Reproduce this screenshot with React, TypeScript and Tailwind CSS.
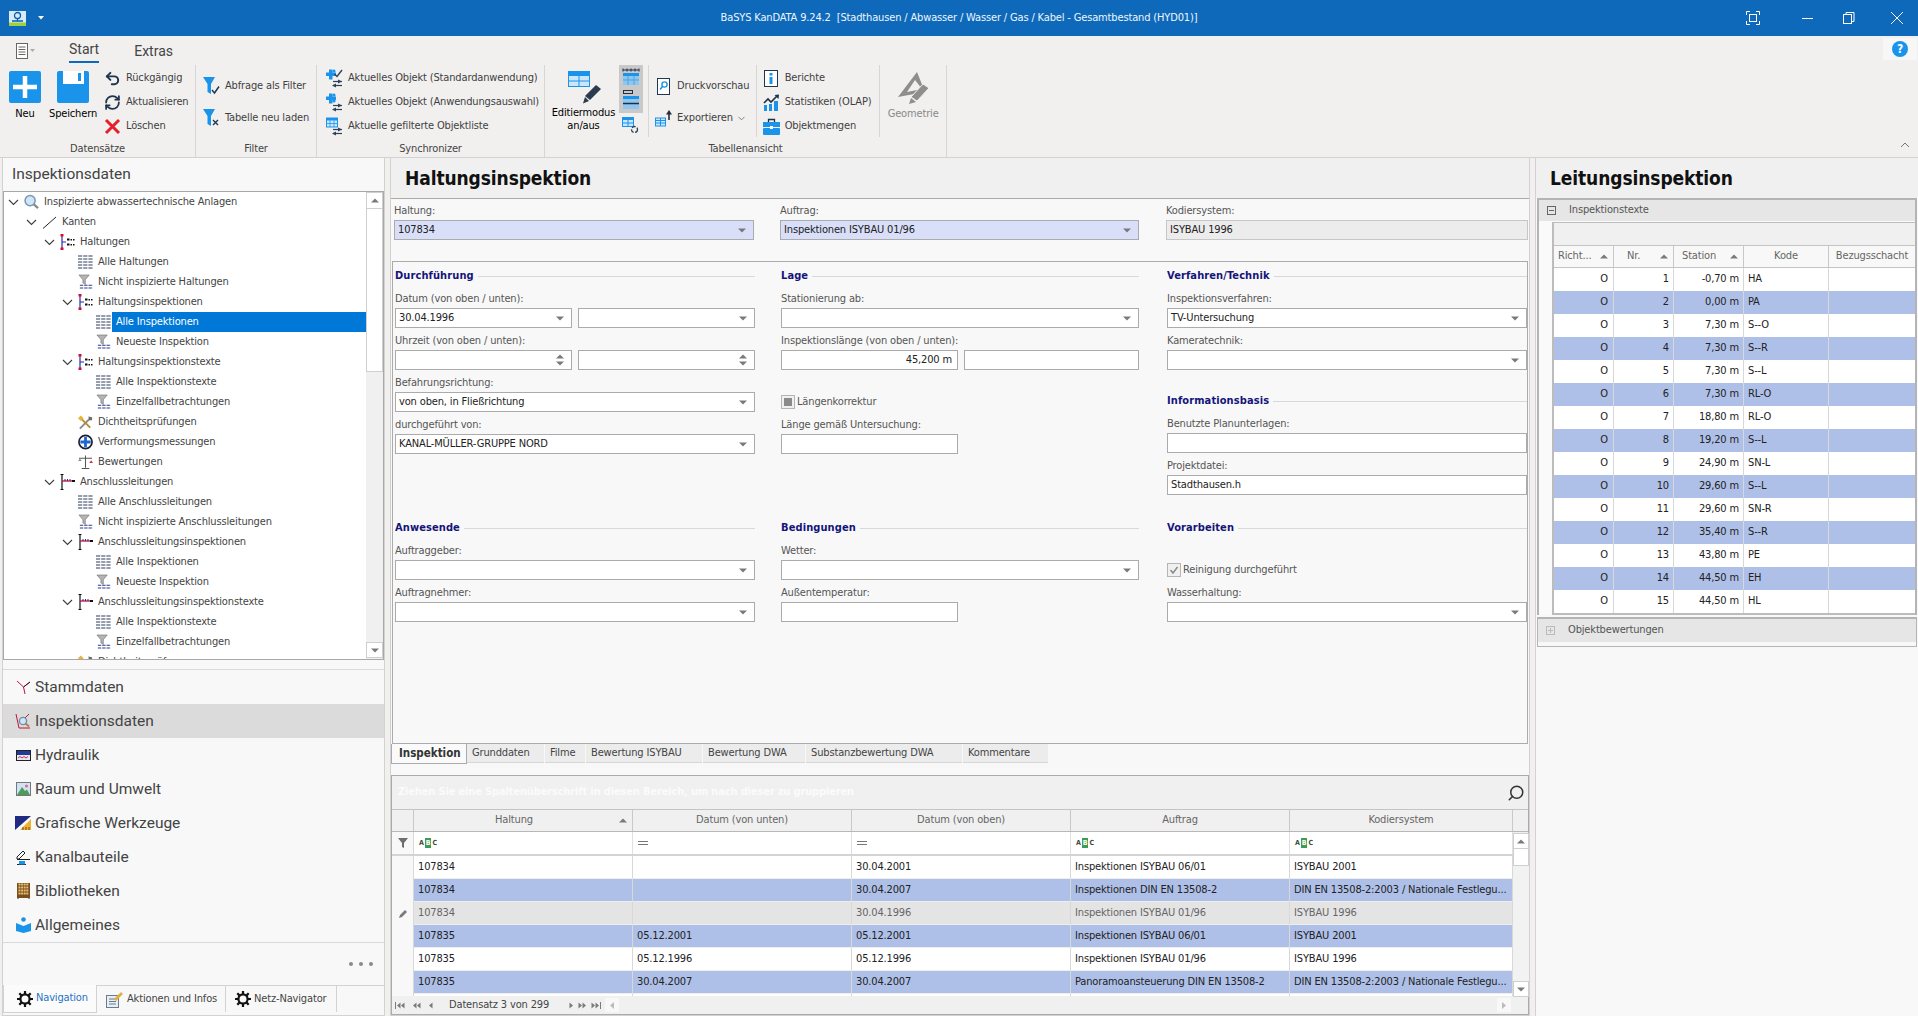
import type { ReactNode } from "react";
import { Undo2, RefreshCw, ChevronDown, Search } from "lucide-react";

// small drawings -------------------------------------------------------------
function Caret({ up }: { up?: boolean }) {
  return (
    <svg width="8" height="5" viewBox="0 0 8 5" className="shrink-0">
      <polygon points={up ? "0,4.5 8,4.5 4,0.5" : "0,0.5 8,0.5 4,4.5"} fill="#7a7a7a" />
    </svg>
  );
}

function Logo() {
  return (
    <svg width="17" height="15" viewBox="0 0 17 15">
      <rect width="17" height="15" fill="#d7ebfa" />
      <circle cx="8.5" cy="4.5" r="3" fill="none" stroke="#0c5fb0" strokeWidth="1.3" />
      <path d="M8.5 7.5V10M3 10h11" stroke="#0c5fb0" strokeWidth="1.3" />
      <rect y="11.5" width="17" height="3.5" fill="#9bd43b" />
    </svg>
  );
}

function PlusTile() {
  return (
    <svg width="32" height="32" viewBox="0 0 32 32">
      <rect width="32" height="32" rx="2" fill="#1a94ea" />
      <path d="M16 5v22M4 16h24" stroke="#fff" strokeWidth="4.5" />
    </svg>
  );
}

function SaveTile() {
  return (
    <svg width="32" height="32" viewBox="0 0 32 32">
      <rect width="32" height="32" rx="2" fill="#1a94ea" />
      <rect x="6" y="0" width="21" height="13" fill="#fff" />
      <rect x="21" y="2" width="3" height="8" fill="#1a94ea" />
    </svg>
  );
}

function RedX() {
  return (
    <svg width="17" height="17" viewBox="0 0 17 17">
      <path d="M2 2l13 13M15 2L2 15" stroke="#e4202a" strokeWidth="3" />
    </svg>
  );
}

function Funnel({ mark }: { mark: "check" | "x" }) {
  return (
    <svg width="17" height="18" viewBox="0 0 17 18">
      <polygon points="0,0 12,0 8,7 8,17 4.5,15 4.5,7" fill="#1a94ea" />
      {mark === "check" ? (
        <path d="M9 13l2.5 3L16 9.5" fill="none" stroke="#22364f" strokeWidth="1.5" />
      ) : (
        <path d="M10 11l5 5M15 11l-5 5" stroke="#22364f" strokeWidth="1.4" />
      )}
    </svg>
  );
}

function SyncArrows() {
  return (
    <g stroke="#2d4258" strokeWidth="1.2" fill="#2d4258">
      <path d="M7 12.5h9" />
      <polygon points="12,10.5 16,12.5 12,14.5" stroke="none" />
      <path d="M7 16.5h9" />
      <polygon points="10,14.5 6,16.5 10,18.5" stroke="none" />
    </g>
  );
}

function SyncIcon({ variant }: { variant: "check" | "plain" | "table" }) {
  return (
    <svg width="17" height="19" viewBox="0 0 17 19">
      {variant === "table" ? (
        <g>
          <rect x="0.5" y="1" width="11" height="9" fill="#cfe6fa" stroke="#1a94ea" />
          <rect x="0.5" y="1" width="11" height="2.5" fill="#1a94ea" />
          <path d="M0.5 6.5h11M4 3.5v6.5M8 3.5v6.5" stroke="#1a94ea" strokeWidth="0.8" />
        </g>
      ) : (
        <g fill="#1a94ea">
          <rect x="3" y="0.5" width="3.5" height="10" />
          <rect x="0" y="3.5" width="10" height="3.5" />
          <circle cx="8" cy="2" r="1.6" />
          {variant === "check" ? (
            <path d="M8.5 5l2.5 2.5L16 1" fill="none" stroke="#2d4258" strokeWidth="1.4" />
          ) : (
            <circle cx="8" cy="8" r="1.6" />
          )}
        </g>
      )}
      <SyncArrows />
    </svg>
  );
}

function BlueTable({ w = 22, h = 16 }: { w?: number; h?: number }) {
  return (
    <svg width={w} height={h} viewBox="0 0 22 16">
      <rect width="22" height="16" fill="#cde5fa" />
      <rect width="22" height="4" fill="#1a94ea" />
      <path d="M0 4.5h22M0 10h22M0 15.5h22M.5 4v12M11 4v12M21.5 4v12" stroke="#1a94ea" />
    </svg>
  );
}

function Pen() {
  return (
    <svg width="19" height="20" viewBox="0 0 19 20">
      <polygon points="13,1 18,5 7,16 2,12" fill="#2b3a4e" />
      <polygon points="2,13 6,17 0,19.5" fill="#2b3a4e" />
    </svg>
  );
}

function ViewIcon({ kind }: { kind: number }) {
  if (kind === 0)
    return (
      <svg width="18" height="18" viewBox="0 0 18 18">
        <path d="M1 2h16M1 .5v3M5 .5v3M9 .5v3M13 .5v3M17 .5v3" stroke="#1f2f44" />
        <rect x="1" y="5" width="16" height="12" fill="#8ec6f0" />
        <rect x="1" y="5" width="16" height="3" fill="#1a94ea" />
        <path d="M1 12h16M6 8v9M12 8v9" stroke="#4aa5e6" />
      </svg>
    );
  if (kind === 1)
    return (
      <svg width="18" height="20" viewBox="0 0 18 20">
        <rect x="1.5" y="0.5" width="9" height="3" fill="none" stroke="#1f2f44" />
        <rect x="1" y="6" width="16" height="13" fill="#8ec6f0" />
        <rect x="1" y="6" width="16" height="3" fill="#1a94ea" />
        <path d="M1 13.5h16" stroke="#1f2f44" strokeWidth="1.5" />
      </svg>
    );
  return (
    <svg width="18" height="17" viewBox="0 0 18 17">
      <rect x="0.5" y="0.5" width="11" height="9" fill="#cde5fa" stroke="#1a94ea" />
      <rect x="0.5" y="0.5" width="11" height="2.5" fill="#1a94ea" />
      <path d="M.5 6h11M6 3v6.5" stroke="#1a94ea" />
      <circle cx="12.5" cy="12.5" r="3" fill="none" stroke="#2d4258" strokeWidth="1.3" strokeDasharray="4 1.5" />
    </svg>
  );
}

function PrintPreview() {
  return (
    <svg width="13" height="17" viewBox="0 0 13 17">
      <rect x="0.5" y="0.5" width="12" height="16" fill="#fff" stroke="#22364f" />
      <circle cx="7.5" cy="6.5" r="2.6" fill="none" stroke="#1a94ea" strokeWidth="1.4" />
      <path d="M5.5 8.5l-2.5 3" stroke="#1a94ea" strokeWidth="1.5" />
    </svg>
  );
}

function ExportIcon() {
  return (
    <svg width="17" height="17" viewBox="0 0 17 17">
      <rect x="0.5" y="8" width="10" height="8" fill="#cde5fa" stroke="#1a94ea" />
      <path d="M0.5 10.5h10M0.5 13h10M5.5 8v8" stroke="#1a94ea" />
      <path d="M14 10V3" stroke="#1f2f44" strokeWidth="1.6" />
      <polygon points="11,4.5 17,4.5 14,0" fill="#1f2f44" />
    </svg>
  );
}

function InfoBox() {
  return (
    <svg width="14" height="17" viewBox="0 0 14 17">
      <rect x="0.5" y="0.5" width="13" height="16" fill="#fff" stroke="#22364f" />
      <rect x="5.5" y="3" width="3" height="2.5" fill="#1a94ea" />
      <rect x="5.5" y="7" width="3" height="7" fill="#1a94ea" />
    </svg>
  );
}

function StatsIcon() {
  return (
    <svg width="17" height="17" viewBox="0 0 17 17">
      <path d="M1 9l4-4 3 3 6-6" fill="none" stroke="#1f2f44" strokeWidth="1.6" />
      <polygon points="11.5,1 16,0.5 15.5,5" fill="#1f2f44" />
      <rect x="1" y="11" width="3" height="6" fill="#1a94ea" />
      <rect x="6" y="10" width="3" height="7" fill="#1a94ea" />
      <rect x="11" y="7" width="4" height="10" fill="#1a94ea" />
    </svg>
  );
}

function Briefcase() {
  return (
    <svg width="17" height="17" viewBox="0 0 17 17">
      <path d="M5.5 4V1.5h6V4" fill="none" stroke="#1f2f44" strokeWidth="1.3" />
      <rect y="4" width="17" height="5" fill="#1a94ea" />
      <rect y="10" width="17" height="7" rx="1" fill="#1a94ea" />
      <rect x="7" y="8" width="3" height="3" fill="#fff" />
    </svg>
  );
}

function GeometryIcon() {
  return (
    <svg width="33" height="33" viewBox="0 0 33 33">
      <path d="M20 1L1 26l27-5z M18 9l-8 12 15-3z" fill="#8e8e8e" fillRule="evenodd" />
      <polygon points="26,13 32,17 20,30 14,26" fill="#8e8e8e" stroke="#f1f0ef" />
      <polygon points="14,27 19,31 12,33" fill="#8e8e8e" />
    </svg>
  );
}

function TreeChevron() {
  return (
    <svg width="11" height="7" viewBox="0 0 11 7">
      <path d="M1 1l4.5 4.5L10 1" fill="none" stroke="#3c3c3c" strokeWidth="1.1" />
    </svg>
  );
}

function TreeIcon({ kind }: { kind: string }) {
  switch (kind) {
    case "search":
      return (
        <svg width="16" height="16" viewBox="0 0 16 16">
          <circle cx="6.5" cy="6.5" r="5.4" fill="#cfe5f8" stroke="#7a97b0" strokeWidth="1.6" />
          <path d="M10.5 10.5l4.5 4" stroke="#8a8a8a" strokeWidth="2.4" />
        </svg>
      );
    case "line":
      return (
        <svg width="15" height="13" viewBox="0 0 15 13">
          <path d="M1 12.5L14 1" stroke="#222" strokeWidth="1" />
        </svg>
      );
    case "haltung":
      return (
        <svg width="15" height="16" viewBox="0 0 15 16">
          <path d="M2 1v14" stroke="#2a2aa8" strokeWidth="1.2" />
          <rect x="0.5" y="0" width="3" height="2.5" fill="#d0102c" />
          <rect x="0.5" y="13.5" width="3" height="2.5" fill="#d0102c" />
          <path d="M2 8h4" stroke="#2a2aa8" />
          <g fill="#111">
            <rect x="7" y="4.5" width="2.5" height="2" />
            <rect x="10.5" y="5" width="1.5" height="1.5" />
            <rect x="13" y="5" width="1.5" height="1.5" />
            <rect x="7" y="9.5" width="2.5" height="2" />
            <rect x="10.5" y="10" width="1.5" height="1.5" />
            <rect x="13" y="10" width="1.5" height="1.5" />
          </g>
        </svg>
      );
    case "anschluss":
      return (
        <svg width="15" height="16" viewBox="0 0 15 16">
          <path d="M2 1v14M.5 .5h3M.5 15.5h3" stroke="#111" strokeWidth="1.2" />
          <path d="M2 7h12" stroke="#c0102c" strokeWidth="1.3" />
          <path d="M5 5v2M7.5 5v2M10 5v2" stroke="#2a2aa8" strokeWidth="1" />
          <rect x="12" y="6" width="3" height="2" fill="#111" />
        </svg>
      );
    case "grid":
      return (
        <svg width="15" height="14" viewBox="0 0 15 14">
          <path d="M0 1h15M0 4h15M0 7h15M0 10h15M0 13h15" stroke="#2c3a5c" strokeWidth="1.2" strokeDasharray="4.2 1" />
        </svg>
      );
    case "filter":
      return (
        <svg width="16" height="16" viewBox="0 0 16 16">
          <polygon points="1,0.5 12,0.5 7.8,5.5 7.8,10.5 5.2,9 5.2,5.5" fill="#b4b4b4" stroke="#6a6a6a" strokeWidth="0.6" />
          <path d="M2 11.5h14M2 14.5h14" stroke="#2c3a8c" strokeDasharray="3.6 1" strokeWidth="1.1" />
        </svg>
      );
    case "tools":
      return (
        <svg width="16" height="15" viewBox="0 0 16 15">
          <path d="M2 14L13 3" stroke="#8b8b8b" strokeWidth="2" />
          <path d="M2 2l11 11" stroke="#b98a32" strokeWidth="2" />
          <path d="M0 3l3-3 3 3-3 3z" fill="#e6b43a" />
          <path d="M11 1l4 1 0 3-3 0z" fill="#6b6b6b" />
        </svg>
      );
    case "circle":
      return (
        <svg width="16" height="16" viewBox="0 0 16 16">
          <circle cx="8" cy="8" r="7" fill="#fff" stroke="#1c2233" strokeWidth="1.8" />
          <path d="M8 2.5v11M2.5 8h11" stroke="#1f66d0" strokeWidth="3" />
        </svg>
      );
    case "scale":
      return (
        <svg width="16" height="16" viewBox="0 0 16 16">
          <path d="M8 1v13M4 15h8M1 4h14" stroke="#555" strokeWidth="1.1" />
          <path d="M0 7l2-2.5L4 7z" fill="#888" />
          <path d="M12 9l2-3 2 3z" fill="#cc3344" />
        </svg>
      );
    default:
      return null;
  }
}

function NavIcon({ kind }: { kind: number }) {
  if (kind === 0)
    return (
      <svg width="15" height="15" viewBox="0 0 15 15">
        <path d="M1 1l6.5 6L14 2M7.5 7l1.5 7" fill="none" stroke="#c0143c" strokeWidth="1" />
        <path d="M7.5 7L14 2" stroke="#222" />
      </svg>
    );
  if (kind === 1)
    return (
      <svg width="16" height="16" viewBox="0 0 16 16">
        <path d="M1 1l3 14h11" fill="none" stroke="#c0143c" strokeWidth="1" />
        <path d="M14 1L9 6" stroke="#c0143c" />
        <circle cx="8" cy="8" r="3.6" fill="#cfe5f8" stroke="#6f8ea8" strokeWidth="1.4" />
        <path d="M10.5 10.5l3.5 3" stroke="#a8844b" strokeWidth="2" />
      </svg>
    );
  if (kind === 2)
    return (
      <svg width="15" height="11" viewBox="0 0 15 11">
        <rect x="0.5" y="0.5" width="14" height="10" fill="#e6e8f4" stroke="#222" />
        <rect x="1" y="1" width="13" height="4" fill="#1f3c9a" />
        <path d="M2 8l2-1.5 2 1.5 2-1.5 2 1.5 2-1.5" fill="none" stroke="#d0304c" />
      </svg>
    );
  if (kind === 3)
    return (
      <svg width="15" height="14" viewBox="0 0 15 14">
        <rect x="0.5" y="0.5" width="14" height="13" fill="#cfe3f6" stroke="#777" />
        <circle cx="10.5" cy="4" r="1.6" fill="#e86a8a" />
        <polygon points="1,13 6,5 9,9 11,7.5 14,13" fill="#4d9b5a" />
      </svg>
    );
  if (kind === 4)
    return (
      <svg width="16" height="14" viewBox="0 0 16 14">
        <polygon points="0,0 16,0 0,14" fill="#1f2a80" />
        <polygon points="5,14 16,3 16,14" fill="#f0b030" />
        <path d="M8 14v-3M11 14v-3M14 14v-3" stroke="#6a4a10" />
      </svg>
    );
  if (kind === 5)
    return (
      <svg width="15" height="15" viewBox="0 0 15 15">
        <path d="M1 7l6-6 2 2-6 6H1z" fill="#fff" stroke="#222" />
        <path d="M1 9.5h8l5 0M1 14.5h9" stroke="#222" />
        <rect x="3" y="11" width="6" height="3.5" fill="#1a94ea" />
      </svg>
    );
  if (kind === 6)
    return (
      <svg width="13" height="16" viewBox="0 0 13 16">
        <rect width="13" height="15" fill="#7a4d1e" />
        <path d="M1.5 1.5h10M1.5 4.5h10M1.5 7.5h10M1.5 10.5h10" stroke="#e4c070" strokeWidth="2" strokeDasharray="2 .6" />
        <path d="M1 15v1M12 15v1" stroke="#333" />
      </svg>
    );
  return (
    <svg width="15" height="16" viewBox="0 0 15 16">
      <circle cx="7.5" cy="2.5" r="2.3" fill="#1a94ea" />
      <path d="M0 6l7.5 3L15 6v8l-7.5 2L0 14z" fill="#1a94ea" />
    </svg>
  );
}

function Gear() {
  return (
    <svg width="16" height="16" viewBox="0 0 16 16" className="shrink-0">
      <circle cx="8" cy="8" r="4.6" fill="none" stroke="#111" strokeWidth="2.2" />
      <path d="M8 0v3M8 13v3M0 8h3M13 8h3M2.3 2.3l2.1 2.1M11.6 11.6l2.1 2.1M13.7 2.3l-2.1 2.1M4.4 11.6l-2.1 2.1" stroke="#111" strokeWidth="2.2" />
    </svg>
  );
}

function InfoClipboard() {
  return (
    <svg width="17" height="17" viewBox="0 0 17 17" className="shrink-0">
      <rect x="0.5" y="4.5" width="12" height="12" fill="#e8eef5" stroke="#6b7b8c" />
      <path d="M3 8h7M3 10.5h7M3 13h7" stroke="#6b7b8c" />
      <polygon points="8,8 15,1 17,3 10,10" fill="#e0b040" />
    </svg>
  );
}

function Abc() {
  return (
    <span className="flex items-center text-[7px] leading-[10px] font-bold text-[#3a4a3a]">
      <span>A</span>
      <span className="mx-[1px] bg-[#3f9b4f] px-[1px] text-white">B</span>
      <span>C</span>
    </span>
  );
}

function NavTri({ left, bar, two }: { left?: boolean; bar?: boolean; two?: boolean }) {
  return (
    <svg width="10" height="7" viewBox="0 0 10 7" className={left ? "" : "rotate-180"}>
      {bar && <rect x="0" y="0" width="1" height="7" fill="#7a7a7a" />}
      <polygon points="2,3.5 5.5,0.5 5.5,6.5" fill="#7a7a7a" />
      {two && <polygon points="6,3.5 9.5,0.5 9.5,6.5" fill="#7a7a7a" />}
    </svg>
  );
}

// ribbon ---------------------------------------------------------------------
function RibbonGroup({ label, width, children }: { label: string; width: string; children: ReactNode }) {
  return (
    <div className={`${width} shrink-0 flex flex-col border-r border-[#d6d6d6] h-[92px]`}>
      <div className="h-[76px] flex">{children}</div>
      <div className="h-[16px] mt-[1px] leading-[16px] text-center text-[#444]">{label}</div>
    </div>
  );
}

function RibbonLine({ icon, label, className }: { icon: ReactNode; label: string; className?: string }) {
  return (
    <div className={`flex items-center text-[#3f3f3f] ${className ?? "h-[24px]"}`}>
      <span className="w-[17px] flex justify-center shrink-0">{icon}</span>
      <span className="ml-[5px] whitespace-nowrap">{label}</span>
    </div>
  );
}

function Ribbon() {
  return (
    <div className="h-[122px] shrink-0 bg-[#f1f0ef] border-b border-[#d2d2d2] relative">
      <div className="h-[29px] flex items-center text-[14px] tracking-normal text-[#444] font-['Roboto',sans-serif]">
        <svg width="20" height="16" viewBox="0 0 20 16" className="ml-[16px]">
          <rect x="0.5" y="0.5" width="11" height="15" fill="#fff" stroke="#666" />
          <path d="M2.5 4h7M2.5 6.5h7M2.5 9h7M2.5 11.5h7" stroke="#666" />
          <polygon points="14,6 19,6 16.5,9" fill="#aaa" />
        </svg>
        <div className="ml-[33px] h-[24px] flex items-center border-b-2 border-[#0f69ba]">Start</div>
        <div className="ml-[35px] pt-[1px]">Extras</div>
      </div>
      <div className="absolute right-[1px] top-[2px] w-[34px] h-[22px] bg-[#f7f7f7] flex items-center justify-center">
        <span className="w-[16px] h-[16px] rounded-full bg-[#1a94ea] text-white text-[12px] font-bold flex items-center justify-center">?</span>
      </div>
      <div className="flex">
        <RibbonGroup label="Datensätze" width="w-[196px]">
          <div className="ml-[9px] w-[32px] flex flex-col items-center pt-[6px]">
            <PlusTile />
            <span className="mt-[3px] h-[16px] leading-[16px]">Neu</span>
          </div>
          <div className="ml-[8px] w-[48px] flex flex-col items-center pt-[6px]">
            <SaveTile />
            <span className="mt-[3px] h-[16px] leading-[16px]">Speichern</span>
          </div>
          <div className="ml-[7px] pt-[1px]">
            <RibbonLine icon={<Undo2 size={17} strokeWidth={2.8} color="#1f344d" />} label="Rückgängig" />
            <RibbonLine icon={<RefreshCw size={17} strokeWidth={2.5} color="#1f344d" />} label="Aktualisieren" />
            <RibbonLine icon={<RedX />} label="Löschen" />
          </div>
        </RibbonGroup>
        <RibbonGroup label="Filter" width="w-[121px]">
          <div className="ml-[7px] pt-[5px]">
            <RibbonLine icon={<Funnel mark="check" />} label="Abfrage als Filter" className="h-[32px]" />
            <RibbonLine icon={<Funnel mark="x" />} label="Tabelle neu laden" className="h-[32px]" />
          </div>
        </RibbonGroup>
        <RibbonGroup label="Synchronizer" width="w-[228px]">
          <div className="ml-[9px] pt-[1px]">
            <RibbonLine icon={<SyncIcon variant="check" />} label="Aktuelles Objekt (Standardanwendung)" />
            <RibbonLine icon={<SyncIcon variant="plain" />} label="Aktuelles Objekt (Anwendungsauswahl)" />
            <RibbonLine icon={<SyncIcon variant="table" />} label="Aktuelle gefilterte Objektliste" />
          </div>
        </RibbonGroup>
        <RibbonGroup label="Tabellenansicht" width="w-[402px]">
          <div className="ml-[8px] w-[61px] flex flex-col items-center pt-[6px]">
            <div className="h-[32px] w-[40px] relative">
              <div className="absolute left-[4px] top-0"><BlueTable /></div>
              <div className="absolute left-[19px] top-[13px]"><Pen /></div>
            </div>
            <span className="mt-[3px] leading-[13px] text-center">Editiermodus<br />an/aus</span>
          </div>
          <div className="ml-[5px] w-[24px] flex flex-col items-center">
            <div className="w-[24px] h-[48px] bg-[#c9c9c9] flex flex-col items-center pt-[3px] gap-[4px]">
              <ViewIcon kind={0} />
              <ViewIcon kind={1} />
            </div>
            <div className="mt-[4px]"><ViewIcon kind={2} /></div>
          </div>
          <div className="ml-[5px] w-[109px] h-[72px] border-l border-r border-[#d6d6d6] pl-[6px] pt-[5px]">
            <RibbonLine icon={<PrintPreview />} label="Druckvorschau" className="h-[32px]" />
            <div className="flex items-center h-[32px] text-[#3f3f3f]">
              <span className="w-[17px] flex justify-center shrink-0"><ExportIcon /></span>
              <span className="ml-[5px]">Exportieren</span>
              <ChevronDown size={11} className="ml-[3px] text-[#777]" />
            </div>
          </div>
          <div className="w-[124px] h-[72px] border-r border-[#d6d6d6] pl-[6px] pt-[1px]">
            <RibbonLine icon={<InfoBox />} label="Berichte" />
            <RibbonLine icon={<StatsIcon />} label="Statistiken (OLAP)" />
            <RibbonLine icon={<Briefcase />} label="Objektmengen" />
          </div>
          <div className="w-[66px] flex flex-col items-center pt-[6px] text-[#888]">
            <GeometryIcon />
            <span className="mt-[2px] h-[16px] leading-[16px]">Geometrie</span>
          </div>
        </RibbonGroup>
      </div>
      <svg width="10" height="6" viewBox="0 0 10 6" className="absolute right-[8px] bottom-[9px]">
        <path d="M1 5l4-4 4 4" fill="none" stroke="#777" />
      </svg>
    </div>
  );
}

// left panel -----------------------------------------------------------------
type TreeItem = { label: string; level: 0 | 1 | 2 | 3 | 4; icon: string; open?: boolean; selected?: boolean };

const treeItems: TreeItem[] = [
  { label: "Inspizierte abwassertechnische Anlagen", level: 0, icon: "search", open: true },
  { label: "Kanten", level: 1, icon: "line", open: true },
  { label: "Haltungen", level: 2, icon: "haltung", open: true },
  { label: "Alle Haltungen", level: 3, icon: "grid" },
  { label: "Nicht inspizierte Haltungen", level: 3, icon: "filter" },
  { label: "Haltungsinspektionen", level: 3, icon: "haltung", open: true },
  { label: "Alle Inspektionen", level: 4, icon: "grid", selected: true },
  { label: "Neueste Inspektion", level: 4, icon: "filter" },
  { label: "Haltungsinspektionstexte", level: 3, icon: "haltung", open: true },
  { label: "Alle Inspektionstexte", level: 4, icon: "grid" },
  { label: "Einzelfallbetrachtungen", level: 4, icon: "filter" },
  { label: "Dichtheitsprüfungen", level: 3, icon: "tools" },
  { label: "Verformungsmessungen", level: 3, icon: "circle" },
  { label: "Bewertungen", level: 3, icon: "scale" },
  { label: "Anschlussleitungen", level: 2, icon: "anschluss", open: true },
  { label: "Alle Anschlussleitungen", level: 3, icon: "grid" },
  { label: "Nicht inspizierte Anschlussleitungen", level: 3, icon: "filter" },
  { label: "Anschlussleitungsinspektionen", level: 3, icon: "anschluss", open: true },
  { label: "Alle Inspektionen", level: 4, icon: "grid" },
  { label: "Neueste Inspektion", level: 4, icon: "filter" },
  { label: "Anschlussleitungsinspektionstexte", level: 3, icon: "anschluss", open: true },
  { label: "Alle Inspektionstexte", level: 4, icon: "grid" },
  { label: "Einzelfallbetrachtungen", level: 4, icon: "filter" },
  { label: "Dichtheitsprüfungen", level: 3, icon: "tools" },
];

const indent = ["pl-[3px]", "pl-[21px]", "pl-[39px]", "pl-[57px]", "pl-[75px]"];

function TreeRow({ item }: { item: TreeItem }) {
  return (
    <div className={`h-[20px] shrink-0 flex items-center ${indent[item.level]}`}>
      <span className="w-[12px] flex justify-center shrink-0">{item.open && <TreeChevron />}</span>
      <span className="ml-[5px] w-[15px] flex justify-center shrink-0">
        <TreeIcon kind={item.icon} />
      </span>
      <span
        className={`ml-[1px] pl-[4px] flex-1 h-[20px] leading-[20px] whitespace-nowrap ${
          item.selected ? "bg-[#0078d7] text-white" : "text-[#444]"
        }`}
      >
        {item.label}
      </span>
    </div>
  );
}

const navItems = ["Stammdaten", "Inspektionsdaten", "Hydraulik", "Raum und Umwelt", "Grafische Werkzeuge", "Kanalbauteile", "Bibliotheken", "Allgemeines"];

function LeftPanel() {
  return (
    <div className="w-[383px] shrink-0 flex flex-col bg-[#f8f8f8] border-x border-b border-[#d2d2d2]">
      <div className="h-[33px] shrink-0 pl-[9px] flex items-center text-[15.5px] tracking-normal text-[#444] font-['Roboto',sans-serif]">
        Inspektionsdaten
      </div>
      <div className="h-[469px] shrink-0 flex bg-white border border-[#a8a8a8] overflow-hidden">
        <div className="flex-1 flex flex-col overflow-hidden">
          {treeItems.map((item, i) => (
            <TreeRow key={i} item={item} />
          ))}
        </div>
        <div className="w-[17px] shrink-0 bg-[#f0f0f0] flex flex-col justify-between">
          <div>
            <div className="h-[17px] bg-white border border-[#cfcfcf] flex items-center justify-center"><Caret up /></div>
            <div className="h-[163px] bg-white border border-t-0 border-[#cfcfcf]" />
          </div>
          <div className="h-[16px] mb-[1px] bg-white border border-[#cfcfcf] flex items-center justify-center"><Caret /></div>
        </div>
      </div>
      <div className="h-[10px] shrink-0 border-b border-[#dadada]" />
      <div className="flex flex-col">
        {navItems.map((label, i) => (
          <div
            key={label}
            className={`h-[34px] flex items-center text-[15.5px] tracking-normal text-[#444] font-['Roboto',sans-serif] ${i === 1 ? "bg-[#dcdbdb]" : ""}`}
          >
            <span className="ml-[10px] w-[20px] flex justify-center"><NavIcon kind={i} /></span>
            <span className="ml-[2px] pt-[1px]">{label}</span>
          </div>
        ))}
      </div>
      <div className="h-[43px] shrink-0 border-t border-[#dadada] flex justify-end items-center pr-[11px] gap-[6px]">
        <span className="w-[4px] h-[4px] rounded-full bg-[#8a8a8a]" />
        <span className="w-[4px] h-[4px] rounded-full bg-[#8a8a8a]" />
        <span className="w-[4px] h-[4px] rounded-full bg-[#8a8a8a]" />
      </div>
      <div className="flex-1 flex border-t border-[#d2d2d2]">
        <div className="w-[94px] h-[28px] -mt-[1px] bg-[#fbfbfb] border border-t-0 border-[#d2d2d2] flex items-center pl-[13px] gap-[3px] text-[#1f73c4]">
          <Gear /> Navigation
        </div>
        <div className="w-[129px] h-[26px] border-r border-[#d2d2d2] flex items-center pl-[9px] gap-[4px] text-[#444] whitespace-nowrap">
          <InfoClipboard /> Aktionen und Infos
        </div>
        <div className="w-[111px] h-[26px] border-r border-[#d2d2d2] flex items-center pl-[9px] gap-[3px] text-[#444] whitespace-nowrap">
          <Gear /> Netz-Navigator
        </div>
      </div>
    </div>
  );
}

// form -----------------------------------------------------------------------
function Label({ children }: { children?: ReactNode }) {
  return <div className="h-[20px] leading-[22px] text-[#555] whitespace-nowrap">{children}</div>;
}

function Combo({ value, tone, className }: { value?: string; tone?: "blue"; className?: string }) {
  return (
    <div
      className={`h-[20px] flex items-center pl-[3px] pr-[7px] border border-[#ababab] text-[#222] ${
        tone === "blue" ? "bg-[#d9dff9]" : "bg-white"
      } ${className ?? ""}`}
    >
      <span className="flex-1 whitespace-nowrap">{value}</span>
      <Caret />
    </div>
  );
}

function Spin({ className }: { className?: string }) {
  return (
    <div className={`h-[20px] flex items-center justify-end pr-[7px] border border-[#ababab] bg-white ${className ?? ""}`}>
      <div className="flex flex-col gap-[2px]">
        <Caret up />
        <Caret />
      </div>
    </div>
  );
}

function TextBox({ value, right, className }: { value?: string; right?: boolean; className?: string }) {
  return (
    <div className={`h-[20px] flex items-center px-[3px] border border-[#ababab] bg-white text-[#222] ${right ? "justify-end pr-[5px]" : ""} ${className ?? ""}`}>
      {value}
    </div>
  );
}

function Field({ label, children }: { label?: string; children: ReactNode }) {
  return (
    <div className="mb-[2px]">
      <Label>{label}</Label>
      {children}
    </div>
  );
}

function SectionHead({ title, className }: { title: string; className?: string }) {
  return (
    <div className={`h-[22px] flex items-center gap-[4px] pb-[2px] ${className ?? ""}`}>
      <span className="font-bold text-[11px] tracking-[0.1px] text-[#14147a] whitespace-nowrap">{title}</span>
      <span className="flex-1 h-px bg-[#d8d8d8]" />
    </div>
  );
}

function CheckRow({ label, checked }: { label: string; checked?: boolean }) {
  return (
    <div className="h-[20px] flex items-center text-[#555]">
      <span className="w-[14px] h-[14px] border border-[#b5b5b5] bg-[#f0f0f0] flex items-center justify-center">
        {checked ? (
          <svg width="10" height="10" viewBox="0 0 10 10">
            <path d="M1.5 5l2.5 3 4.5-6" fill="none" stroke="#8a8a8a" strokeWidth="1.5" />
          </svg>
        ) : (
          <span className="w-[8px] h-[8px] bg-[#8a8a8a]" />
        )}
      </span>
      <span className="ml-[2px]">{label}</span>
    </div>
  );
}

function FormArea() {
  return (
    <>
      <div className="h-[41px] shrink-0 bg-[#f0f0f0] border-b border-[#ababab] pl-[14px] flex items-center text-[19px] tracking-[-0.1px] font-bold text-[#111]">
        Haltungsinspektion
      </div>
      <div className="h-[62px] shrink-0 flex pl-[3px] pt-[1px]">
        <div className="w-[360px]">
          <Label>Haltung:</Label>
          <Combo value="107834" tone="blue" />
        </div>
        <div className="ml-[26px] w-[359px]">
          <Label>Auftrag:</Label>
          <Combo value="Inspektionen ISYBAU 01/96" tone="blue" />
        </div>
        <div className="ml-[27px] w-[362px]">
          <Label>Kodiersystem:</Label>
          <div className="h-[20px] flex items-center pl-[3px] bg-[#ececec] border border-[#c6c6c6] text-[#222]">ISYBAU 1996</div>
        </div>
      </div>
      <div className="h-[483px] shrink-0 ml-[1px] mr-[1px] border border-[#ababab] pl-[2px] pt-[4px] flex">
        <div className="w-[360px] shrink-0">
          <SectionHead title="Durchführung" />
          <Field label="Datum (von oben / unten):">
            <div className="flex gap-[6px]">
              <Combo value="30.04.1996" className="flex-1" />
              <Combo className="flex-1" />
            </div>
          </Field>
          <Field label="Uhrzeit (von oben / unten):">
            <div className="flex gap-[6px]">
              <Spin className="flex-1" />
              <Spin className="flex-1" />
            </div>
          </Field>
          <Field label="Befahrungsrichtung:"><Combo value="von oben, in Fließrichtung" /></Field>
          <Field label="durchgeführt von:"><Combo value="KANAL-MÜLLER-GRUPPE NORD" /></Field>
          <SectionHead title="Anwesende" className="mt-[64px]" />
          <Field label="Auftraggeber:"><Combo /></Field>
          <Field label="Auftragnehmer:"><Combo /></Field>
        </div>
        <div className="ml-[26px] w-[358px] shrink-0">
          <SectionHead title="Lage" />
          <Field label="Stationierung ab:"><Combo /></Field>
          <Field label="Inspektionslänge (von oben / unten):">
            <div className="flex gap-[6px]">
              <TextBox value="45,200 m" right className="w-[177px]" />
              <TextBox className="flex-1" />
            </div>
          </Field>
          <Field><CheckRow label="Längenkorrektur" /></Field>
          <Field label="Länge gemäß Untersuchung:"><TextBox className="w-[177px]" /></Field>
          <SectionHead title="Bedingungen" className="mt-[64px]" />
          <Field label="Wetter:"><Combo /></Field>
          <Field label="Außentemperatur:"><TextBox className="w-[177px]" /></Field>
        </div>
        <div className="ml-[28px] w-[360px] shrink-0">
          <SectionHead title="Verfahren/Technik" />
          <Field label="Inspektionsverfahren:"><Combo value="TV-Untersuchung" /></Field>
          <Field label="Kameratechnik:"><Combo /></Field>
          <SectionHead title="Informationsbasis" className="mt-[21px]" />
          <Field label="Benutzte Planunterlagen:"><TextBox /></Field>
          <Field label="Projektdatei:"><TextBox value="Stadthausen.h" /></Field>
          <SectionHead title="Vorarbeiten" className="mt-[23px]" />
          <Field><CheckRow label="Reinigung durchgeführt" checked /></Field>
          <Field label="Wasserhaltung:"><Combo /></Field>
        </div>
      </div>
    </>
  );
}

const tabs = [
  { label: "Grunddaten", w: "w-[77px]" },
  { label: "Filme", w: "w-[40px]" },
  { label: "Bewertung ISYBAU", w: "w-[116px]" },
  { label: "Bewertung DWA", w: "w-[102px]" },
  { label: "Substanzbewertung DWA", w: "w-[156px]" },
  { label: "Kommentare", w: "w-[85px]" },
];

function TabStrip() {
  return (
    <div className="h-[20px] shrink-0 flex mb-[11px]">
      <div className="w-[76px] h-[20px] border border-t-0 border-[#ababab] bg-[#fafafa] font-bold text-[11.5px] tracking-normal text-[#333] flex items-center pl-[7px]">Inspektion</div>
      {tabs.map((t) => (
        <div key={t.label} className={`${t.w} h-[19px] mr-[1px] last:mr-0 bg-[#ececec] border-b border-[#d6d6d6] text-[#444] flex items-center pl-[5px]`}>
          {t.label}
        </div>
      ))}
    </div>
  );
}

// bottom grid ----------------------------------------------------------------
const gridRows = [
  { c: ["107834", "", "30.04.2001", "Inspektionen ISYBAU 06/01", "ISYBAU 2001"], tone: "white" },
  { c: ["107834", "", "30.04.2007", "Inspektionen DIN EN 13508-2", "DIN EN 13508-2:2003 / Nationale Festlegu..."], tone: "blue" },
  { c: ["107834", "", "30.04.1996", "Inspektionen ISYBAU 01/96", "ISYBAU 1996"], tone: "gray" },
  { c: ["107835", "05.12.2001", "05.12.2001", "Inspektionen ISYBAU 06/01", "ISYBAU 2001"], tone: "blue" },
  { c: ["107835", "05.12.1996", "05.12.1996", "Inspektionen ISYBAU 01/96", "ISYBAU 1996"], tone: "white" },
  { c: ["107835", "30.04.2007", "30.04.2007", "Panoramoansteuerung DIN EN 13508-2", "DIN EN 13508-2:2003 / Nationale Festlegu..."], tone: "blue" },
];

const gridCols = ["w-[219px]", "w-[219px]", "w-[219px]", "w-[219px]", "w-[223px]"];
const gridHeads = ["Haltung", "Datum (von unten)", "Datum (von oben)", "Auftrag", "Kodiersystem"];

const toneClass: Record<string, string> = {
  white: "bg-white text-[#222]",
  blue: "bg-[#afc0e8] text-[#222]",
  gray: "bg-[#e4e4e4] text-[#666]",
};

function GridArea() {
  return (
    <div className="flex-1 flex flex-col ml-[0px] border border-[#ababab] bg-[#f0f0f0] min-h-0">
      <div className="h-[34px] shrink-0 flex items-center justify-between pl-[6px] pr-[3px] border-b border-[#c4c4c4]">
        <span className="font-bold text-[#fbfbfb]">Ziehen Sie eine Spaltenüberschrift in diesen Bereich, um nach dieser zu gruppieren</span>
        <Search size={18} strokeWidth={2} className="text-[#333] -scale-x-100" />
      </div>
      <div className="h-[22px] shrink-0 flex border-b border-[#b8b8b8]">
        <div className="w-[22px] border-r border-[#c8c8c8]" />
        {gridHeads.map((h, i) => (
          <div key={h} className={`${gridCols[i]} relative flex items-center justify-center border-r border-[#c8c8c8] text-[#666] ${i === 0 ? "pr-[18px]" : ""}`}>
            {h}
            {i === 0 && (
              <span className="absolute right-[5px] top-[8px]"><Caret up /></span>
            )}
          </div>
        ))}
      </div>
      <div className="flex flex-1 min-h-0">
        <div className="flex-1 flex flex-col">
          <div className="h-[24px] shrink-0 flex bg-white border-b-2 border-[#d4d4d4]">
            <div className="w-[22px] border-r border-[#d8d8d8] bg-[#f8f8f8] flex items-center justify-center">
              <svg width="10" height="10" viewBox="0 0 10 10"><polygon points="0,0 10,0 6,5 6,10 4,9 4,5" fill="#6e6e6e" /></svg>
            </div>
            {gridHeads.map((h, i) => (
              <div key={h} className={`${gridCols[i]} flex items-center pl-[5px] border-r border-[#e0e0e0]`}>
                {i === 1 || i === 2 ? <span className="w-[10px] h-[4px] border-y border-[#777]" /> : <Abc />}
              </div>
            ))}
          </div>
          {gridRows.map((row, r) => (
            <div key={r} className="h-[23px] shrink-0 flex">
              <div className="w-[22px] border-r border-[#d8d8d8] bg-[#f8f8f8] flex items-center justify-center">
                {r === 2 && (
                  <svg width="10" height="10" viewBox="0 0 10 10"><path d="M1 9l1-3 5-5 2 2-5 5z" fill="#7a7a7a" /></svg>
                )}
              </div>
              {row.c.map((cell, i) => (
                <div key={i} className={`${gridCols[i]} flex items-center pl-[4px] border-r border-[#d8d8d8] border-b border-b-[#eeeeee] whitespace-nowrap overflow-hidden ${toneClass[row.tone]}`}>
                  {cell}
                </div>
              ))}
            </div>
          ))}
          <div className="h-[2px] shrink-0 flex">
            <div className="w-[22px] border-r border-[#d8d8d8] bg-[#f8f8f8]" />
            {gridCols.map((c, i) => (
              <div key={i} className={`${c} bg-white border-r border-[#d8d8d8]`} />
            ))}
          </div>
          <div className="flex-1 flex items-center pl-[3px] text-[#444]">
            <span className="flex items-center gap-[6px]">
              <NavTri left bar two />
              <NavTri left two />
              <NavTri left />
            </span>
            <span className="ml-[12px] whitespace-nowrap">Datensatz 3 von 299</span>
            <span className="ml-[16px] flex items-center gap-[3px]">
              <NavTri />
              <NavTri two />
              <NavTri bar two />
            </span>
            <span className="ml-[4px] w-[14px] h-[14px] bg-[#f8f8f8] flex items-center justify-center">
              <svg width="4" height="7" viewBox="0 0 4 7"><polygon points="4,0 4,7 0,3.5" fill="#bbb" /></svg>
            </span>
            <span className="flex-1" />
            <span className="mr-[2px] w-[14px] h-[14px] bg-[#f8f8f8] flex items-center justify-center">
              <svg width="4" height="7" viewBox="0 0 4 7"><polygon points="0,0 0,7 4,3.5" fill="#bbb" /></svg>
            </span>
          </div>
        </div>
        <div className="w-[16px] shrink-0 mt-[1px] flex flex-col">
          <div className="h-[16px] bg-white border border-[#cfcfcf] flex items-center justify-center"><Caret up /></div>
          <div className="h-[17px] bg-white border border-t-0 border-[#cfcfcf]" />
          <div className="h-[115px] bg-[#f2f2f2]" />
          <div className="h-[16px] bg-white border border-[#cfcfcf] flex items-center justify-center"><Caret /></div>
        </div>
      </div>
    </div>
  );
}

// right panel ----------------------------------------------------------------
const codes = ["HA", "PA", "S--O", "S--R", "S--L", "RL-O", "RL-O", "S--L", "SN-L", "S--L", "SN-R", "S--R", "PE", "EH", "HL"];
const stations = ["-0,70 m", "0,00 m", "7,30 m", "7,30 m", "7,30 m", "7,30 m", "18,80 m", "19,20 m", "24,90 m", "29,60 m", "29,60 m", "35,40 m", "43,80 m", "44,50 m", "44,50 m"];

function GroupBar({ label, open, height }: { label: string; open?: boolean; height: string }) {
  return (
    <div className={`${height} flex items-center bg-[#e6e6e6] text-[#555]`}>
      <span className={`ml-[8px] w-[9px] h-[9px] border flex items-center justify-center relative ${open ? "border-[#666]" : "border-[#bbb]"}`}>
        <span className={`w-[5px] h-px ${open ? "bg-[#666]" : "bg-[#bbb]"}`} />
        {!open && <span className="absolute w-px h-[5px] bg-[#bbb]" />}
      </span>
      <span className="ml-[13px]">{label}</span>
    </div>
  );
}

const rightHeads = [
  { label: "Richt...", w: "w-[60px]", pl: "pl-[4px]", sort: true },
  { label: "Nr.", w: "w-[60px]", pl: "pl-[13px]", sort: true },
  { label: "Station", w: "w-[70px]", pl: "pl-[8px]", sort: true },
  { label: "Kode", w: "w-[85px]", pl: "" },
  { label: "Bezugsschacht", w: "flex-1", pl: "" },
];

function RightPanel() {
  return (
    <div className="flex-1 flex flex-col bg-[#f8f8f8] border-l border-[#d2d2d2]">
      <div className="h-[40px] shrink-0 bg-[#f0f0f0] pl-[14px] flex items-center text-[19px] tracking-[-0.1px] font-bold text-[#111]">Leitungsinspektion</div>
      <div className="ml-[1px] mr-[1px] border-2 border-[#b4b4b4] border-b-0">
        <GroupBar label="Inspektionstexte" open height="h-[21px]" />
        <div className="pl-[13px] pt-[1px] bg-[#fafafa]">
          <div className="border-2 border-r-0 border-t border-[#bcbcbc] bg-white">
            <div className="h-[23px] bg-[#f0f0f0] border-b border-[#c4c4c4]" />
            <div className="h-[22px] flex bg-[#f8f8f8] border-b border-[#c4c4c4] text-[#666]">
              {rightHeads.map((h) => (
                <div
                  key={h.label}
                  className={`${h.w} ${h.pl} flex items-center ${h.sort ? "justify-between pr-[5px]" : "justify-center"} border-r last:border-r-0 border-[#c8c8c8] whitespace-nowrap`}
                >
                  {h.label}
                  {h.sort && <Caret up />}
                </div>
              ))}
            </div>
            {codes.map((code, i) => (
              <div key={i} className={`h-[23px] flex text-[#222] ${i % 2 === 1 ? "bg-[#afc0e8]" : "bg-white"}`}>
                <div className="w-[60px] border-r border-[#d8d8d8] flex items-center justify-end pr-[5px]">O</div>
                <div className="w-[60px] border-r border-[#d8d8d8] flex items-center justify-end pr-[4px]">{i + 1}</div>
                <div className="w-[70px] border-r border-[#d8d8d8] flex items-center justify-end pr-[4px]">{stations[i]}</div>
                <div className="w-[85px] border-r border-[#d8d8d8] flex items-center pl-[4px]">{code}</div>
                <div className="flex-1" />
              </div>
            ))}
          </div>
        </div>
      </div>
      <div className="ml-[1px] mr-[1px] mt-[2px] border-t-2 border-x border-b border-[#b4b4b4] h-[30px]">
        <GroupBar label="Objektbewertungen" height="h-[23px]" />
      </div>
    </div>
  );
}

export default function App() {
  return (
    <div className="w-screen h-screen overflow-hidden flex flex-col bg-[#f1f0ef] text-[11px] tracking-[-0.15px] font-['DejaVu_Sans_Condensed','Noto_Sans',sans-serif]">
      <div className="h-[36px] shrink-0 bg-[#0f69ba] grid grid-cols-[1fr_auto_1fr] items-center text-white">
        <div className="flex items-center pl-[9px]">
          <Logo />
          <svg width="6" height="4" viewBox="0 0 6 4" className="ml-[12px]"><polygon points="0,0 6,0 3,3.5" fill="#fff" /></svg>
        </div>
        <div className="whitespace-pre text-[#eef5fb]">BaSYS KanDATA 9.24.2  [Stadthausen / Abwasser / Wasser / Gas / Kabel - Gesamtbestand (HYD01)]</div>
        <div className="flex items-center justify-end pr-[14px]">
          <svg width="14" height="14" viewBox="0 0 14 14" fill="none" stroke="#fff">
            <path d="M.5 4V.5H4M10 .5h3.5V4M13.5 10v3.5H10M4 13.5H.5V10" />
            <rect x="3.5" y="3.5" width="7" height="7" />
          </svg>
          <svg width="14" height="14" viewBox="0 0 14 14" className="ml-[39px]" stroke="#fff"><path d="M3 7.5h11" /></svg>
          <svg width="14" height="14" viewBox="0 0 14 14" className="ml-[29px]" fill="none" stroke="#fff">
            <rect x="1.5" y="3.5" width="8" height="9" />
            <path d="M4 3.5V1.5h8v9h-2.5" />
          </svg>
          <svg width="14" height="14" viewBox="0 0 14 14" className="ml-[34px]" stroke="#fff"><path d="M1 1l12 12M13 1L1 13" /></svg>
        </div>
      </div>
      <Ribbon />
      <div className="flex-1 flex pl-[2px] min-h-0">
        <LeftPanel />
        <div className="w-[5px] shrink-0" />
        <div className="w-[1140px] shrink-0 flex flex-col bg-[#f8f8f8] border-x border-b border-[#d2d2d2]">
          <FormArea />
          <TabStrip />
          <GridArea />
        </div>
        <div className="w-[5px] shrink-0" />
        <RightPanel />
      </div>
    </div>
  );
}
